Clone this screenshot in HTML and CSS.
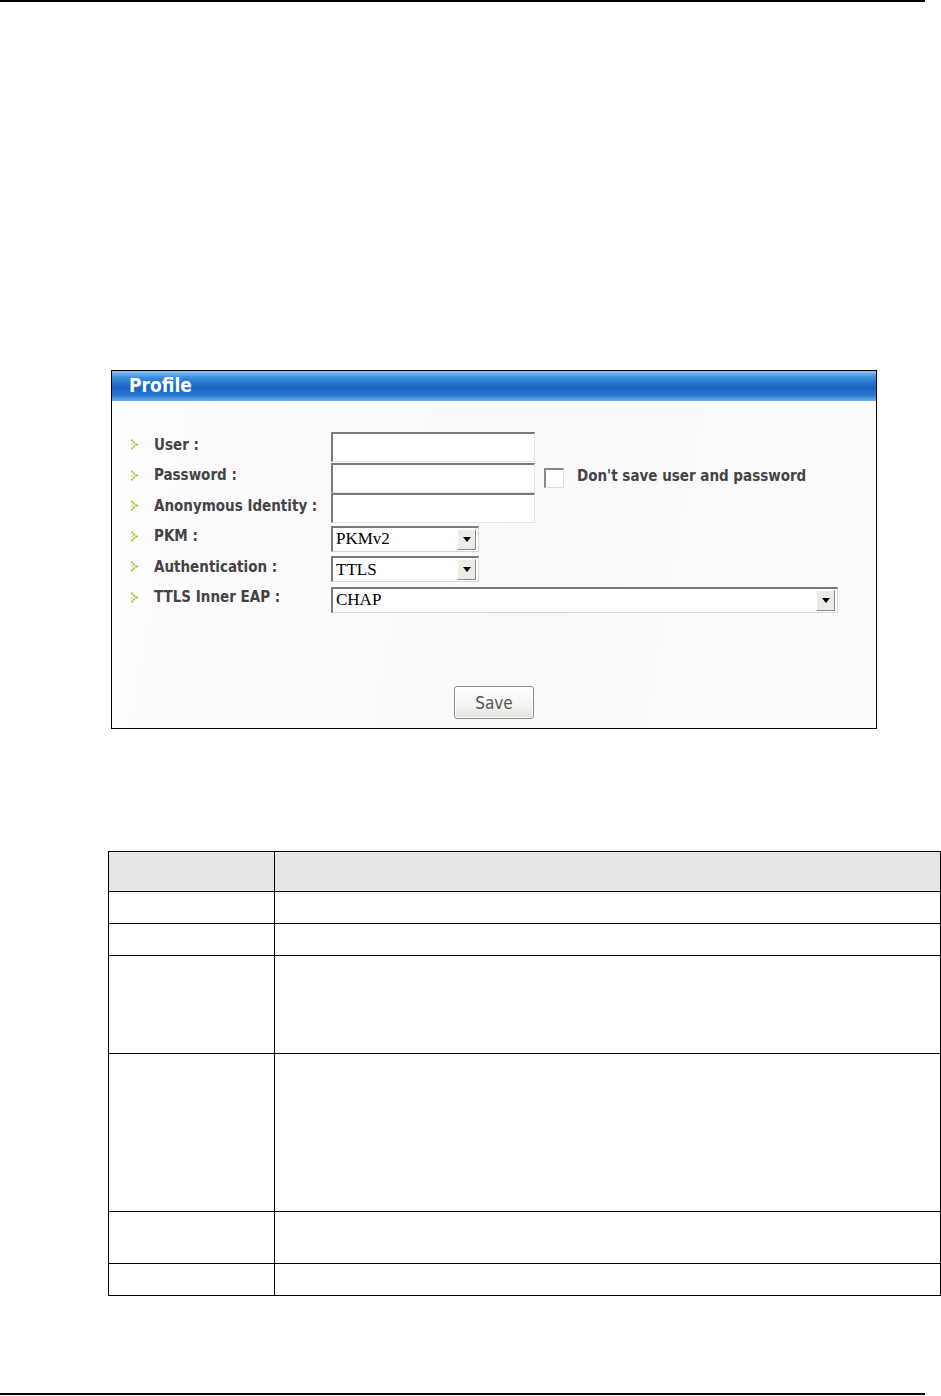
FILE: index.html
```html
<!DOCTYPE html>
<html>
<head>
<meta charset="utf-8">
<link rel="stylesheet" href="styles.css">
</head>
<body>
<div class="page">
  <div class="rule rule-top"></div>

  <div class="panel">
    <div class="panel-head">Profile</div>
    <div class="panel-body">
      <div class="form">
        <div class="lbl"><svg class="bul" viewBox="0 0 8 12"><rect x="0" y="1" width="2" height="2"/><rect x="2" y="3" width="2" height="2"/><rect x="4" y="5" width="3" height="2"/><rect x="2" y="7" width="2" height="2"/><rect x="0" y="9" width="2" height="2"/><rect x="0" y="5" width="2" height="2" class="lt"/></svg>User :</div>
        <div class="ctl"><div class="txt"></div></div>

        <div class="lbl"><svg class="bul" viewBox="0 0 8 12"><rect x="0" y="1" width="2" height="2"/><rect x="2" y="3" width="2" height="2"/><rect x="4" y="5" width="3" height="2"/><rect x="2" y="7" width="2" height="2"/><rect x="0" y="9" width="2" height="2"/><rect x="0" y="5" width="2" height="2" class="lt"/></svg>Password :</div>
        <div class="ctl"><div class="txt"></div><div class="chk"></div><span class="chk-lbl">Don't save user and password</span></div>

        <div class="lbl"><svg class="bul" viewBox="0 0 8 12"><rect x="0" y="1" width="2" height="2"/><rect x="2" y="3" width="2" height="2"/><rect x="4" y="5" width="3" height="2"/><rect x="2" y="7" width="2" height="2"/><rect x="0" y="9" width="2" height="2"/><rect x="0" y="5" width="2" height="2" class="lt"/></svg>Anonymous Identity :</div>
        <div class="ctl"><div class="txt short"></div></div>

        <div class="lbl"><svg class="bul" viewBox="0 0 8 12"><rect x="0" y="1" width="2" height="2"/><rect x="2" y="3" width="2" height="2"/><rect x="4" y="5" width="3" height="2"/><rect x="2" y="7" width="2" height="2"/><rect x="0" y="9" width="2" height="2"/><rect x="0" y="5" width="2" height="2" class="lt"/></svg>PKM :</div>
        <div class="ctl"><div class="sel"><span class="val">PKMv2</span><span class="arr"><svg viewBox="0 0 8 5"><path d="M0 0H8L4 5Z"/></svg></span></div></div>

        <div class="lbl"><svg class="bul" viewBox="0 0 8 12"><rect x="0" y="1" width="2" height="2"/><rect x="2" y="3" width="2" height="2"/><rect x="4" y="5" width="3" height="2"/><rect x="2" y="7" width="2" height="2"/><rect x="0" y="9" width="2" height="2"/><rect x="0" y="5" width="2" height="2" class="lt"/></svg>Authentication :</div>
        <div class="ctl"><div class="sel"><span class="val">TTLS</span><span class="arr"><svg viewBox="0 0 8 5"><path d="M0 0H8L4 5Z"/></svg></span></div></div>

        <div class="lbl"><svg class="bul" viewBox="0 0 8 12"><rect x="0" y="1" width="2" height="2"/><rect x="2" y="3" width="2" height="2"/><rect x="4" y="5" width="3" height="2"/><rect x="2" y="7" width="2" height="2"/><rect x="0" y="9" width="2" height="2"/><rect x="0" y="5" width="2" height="2" class="lt"/></svg>TTLS Inner EAP :</div>
        <div class="ctl"><div class="sel wide"><span class="val">CHAP</span><span class="arr"><svg viewBox="0 0 8 5"><path d="M0 0H8L4 5Z"/></svg></span></div></div>
      </div>
      <div class="actions"><div class="btn">Save</div></div>
    </div>
  </div>

  <table class="desc">
    <tr class="hd"><td class="c1"></td><td></td></tr>
    <tr class="r32"><td class="c1"></td><td></td></tr>
    <tr class="r32"><td class="c1"></td><td></td></tr>
    <tr class="r98"><td class="c1"></td><td></td></tr>
    <tr class="r158"><td class="c1"></td><td></td></tr>
    <tr class="r52"><td class="c1"></td><td></td></tr>
    <tr class="r32"><td class="c1"></td><td></td></tr>
  </table>

  <div class="rule rule-bottom"></div>
</div>
</body>
</html>
```

FILE: styles.css
```css
html, body {
  margin: 0;
  padding: 0;
  background: #fff;
}
.page {
  width: 941px;
  height: 1396px;
  display: flex;
  flex-direction: column;
  font-family: "Liberation Sans", Arial, sans-serif;
}
.rule {
  width: 925px;
  height: 2px;
  background: #000;
  flex: none;
}
.rule-bottom {
  margin-top: auto;
  margin-bottom: 1px;
}

/* Profile panel */
.panel {
  margin-top: 368px;
  margin-left: 111px;
  width: 764px;
  height: 357px;
  border: 1px solid #000;
  background: linear-gradient(100deg, #fefcff 0%, #fbf8fb 55%, #fdfbfd 100%);
  display: flex;
  flex-direction: column;
  flex: none;
}
.panel-head {
  height: 30px;
  line-height: 29px;
  padding-left: 17px;
  color: #fff;
  font-family: "DejaVu Sans Condensed", "DejaVu Sans", sans-serif;
  font-weight: bold;
  font-size: 19px;
  background: linear-gradient(180deg, #8cc6f2 0%, #3b8ddc 22%, #1864c0 55%, #2676cf 80%, #6eaee6 100%);
  flex: none;
}
.panel-body {
  flex: 1;
  display: flex;
  flex-direction: column;
  padding: 31px 0 9px 19px;
}
.form {
  display: grid;
  grid-template-columns: 200px 1fr;
  grid-auto-rows: 30.5px;
  align-items: center;
}
.lbl {
  display: flex;
  align-items: center;
  padding-bottom: 5px;
  font-family: "DejaVu Sans Condensed", "DejaVu Sans", sans-serif;
  font-weight: bold;
  font-size: 15px;
  color: #444;
  white-space: nowrap;
}
.bul {
  width: 8px;
  height: 13px;
  margin-right: 15px;
  fill: #a6c63c;
}
.bul .lt { fill: #dbe8b0; }
.ctl {
  display: flex;
  align-items: center;
}
.txt {
  width: 201px;
  height: 27px;
  border-top: 2px solid #7a7a7a;
  border-left: 2px solid #7a7a7a;
  border-right: 1px solid #e4e4e4;
  border-bottom: 1px solid #e4e4e4;
  background: #fff;
}
.chk {
  width: 17px;
  height: 17px;
  margin-left: 9px;
  border-top: 2px solid #888;
  border-left: 2px solid #888;
  border-right: 1px solid #ddd;
  border-bottom: 1px solid #ddd;
  background: #fff;
}
.chk-lbl {
  margin-left: 13px;
  margin-bottom: 4px;
  font-family: "DejaVu Sans Condensed", "DejaVu Sans", sans-serif;
  font-weight: bold;
  font-size: 15px;
  color: #444;
}
.sel {
  width: 145px;
  height: 23px;
  border-top: 2px solid #7a7a7a;
  border-left: 2px solid #7a7a7a;
  border-right: 1px solid #d8d8d8;
  border-bottom: 1px solid #d8d8d8;
  background: #fff;
  display: flex;
  align-items: center;
  justify-content: space-between;
}
.sel.wide { width: 504px; }
.val {
  font-family: "Liberation Serif", "Times New Roman", serif;
  font-size: 17px;
  color: #000;
  padding-left: 3px;
}
.arr {
  width: 17px;
  height: 19px;
  margin-right: 2px;
  background: #ecebe6;
  border-right: 1px solid #888;
  border-bottom: 1px solid #888;
  border-top: 1px solid #fff;
  border-left: 1px solid #fff;
  display: flex;
  align-items: center;
  justify-content: center;
}
.arr svg {
  width: 8px;
  height: 5px;
  fill: #000;
}
.actions {
  margin-top: auto;
  display: flex;
  justify-content: center;
  padding-right: 19px;
}
.btn {
  width: 78px;
  height: 31px;
  border: 1px solid #8a8a8a;
  border-radius: 3px;
  background: linear-gradient(180deg, #ffffff 0%, #f4f4f2 60%, #e2e1dc 100%);
  box-shadow: inset 0 0 0 1px #fff;
  display: flex;
  align-items: center;
  justify-content: center;
  font-family: "DejaVu Sans Condensed", "DejaVu Sans", sans-serif;
  font-size: 17px;
  color: #555;
}

/* Description table */
.desc {
  margin-top: 122px;
  margin-left: 108px;
  width: 833px;
  border-collapse: collapse;
  table-layout: fixed;
  flex: none;
}
.desc td {
  border: 1px solid #000;
  padding: 0;
}
.desc td.c1 { width: 165px; }
.desc tr.hd td { background: #e6e6e6; height: 39px; }
.desc tr.r32 td { height: 31px; }
.desc tr.r98 td { height: 97px; }
.desc tr.r158 td { height: 157px; }
.desc tr.r52 td { height: 51px; }
```
